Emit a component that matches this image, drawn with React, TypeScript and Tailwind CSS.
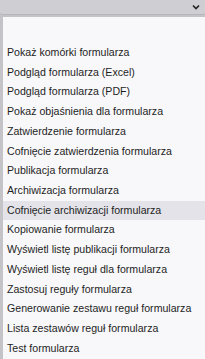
const items = [
  "Pokaż komórki formularza",
  "Podgląd formularza (Excel)",
  "Podgląd formularza (PDF)",
  "Pokaż objaśnienia dla formularza",
  "Zatwierdzenie formularza",
  "Cofnięcie zatwierdzenia formularza",
  "Publikacja formularza",
  "Archiwizacja formularza",
  "Cofnięcie archiwizacji formularza",
  "Kopiowanie formularza",
  "Wyświetl listę publikacji formularza",
  "Wyświetl listę reguł dla formularza",
  "Zastosuj reguły formularza",
  "Generowanie zestawu reguł formularza",
  "Lista zestawów reguł formularza",
  "Test formularza",
];

export default function App() {
  return (
    <div className="w-[205px] h-[359px] overflow-hidden bg-[#c4c4c8] flex flex-col font-['Liberation_Sans',Arial,sans-serif]">
      <div className="h-[15px] shrink-0 bg-[#cfcfd3] border-b border-[#b5b5ba] rounded-b-[3px] flex items-center justify-end pr-[5px]">
        <svg width="8" height="6" viewBox="0 0 8 6">
          <path d="M1 1.5 L4 4.5 L7 1.5" fill="none" stroke="#222" strokeWidth="1.6" />
        </svg>
      </div>
      <div className="flex-1 ml-[3px] mt-[2px] bg-[#f8f8fa] pt-[26px]">
        {items.map((t, i) => (
          <div
            key={t}
            className={`h-[19.73px] flex items-center pl-[4px] text-[10.6px] text-[#1e1e1e] whitespace-nowrap ${
              i === 8 ? "bg-[#e3e3e9]" : ""
            }`}
          >
            {t}
          </div>
        ))}
      </div>
    </div>
  );
}
